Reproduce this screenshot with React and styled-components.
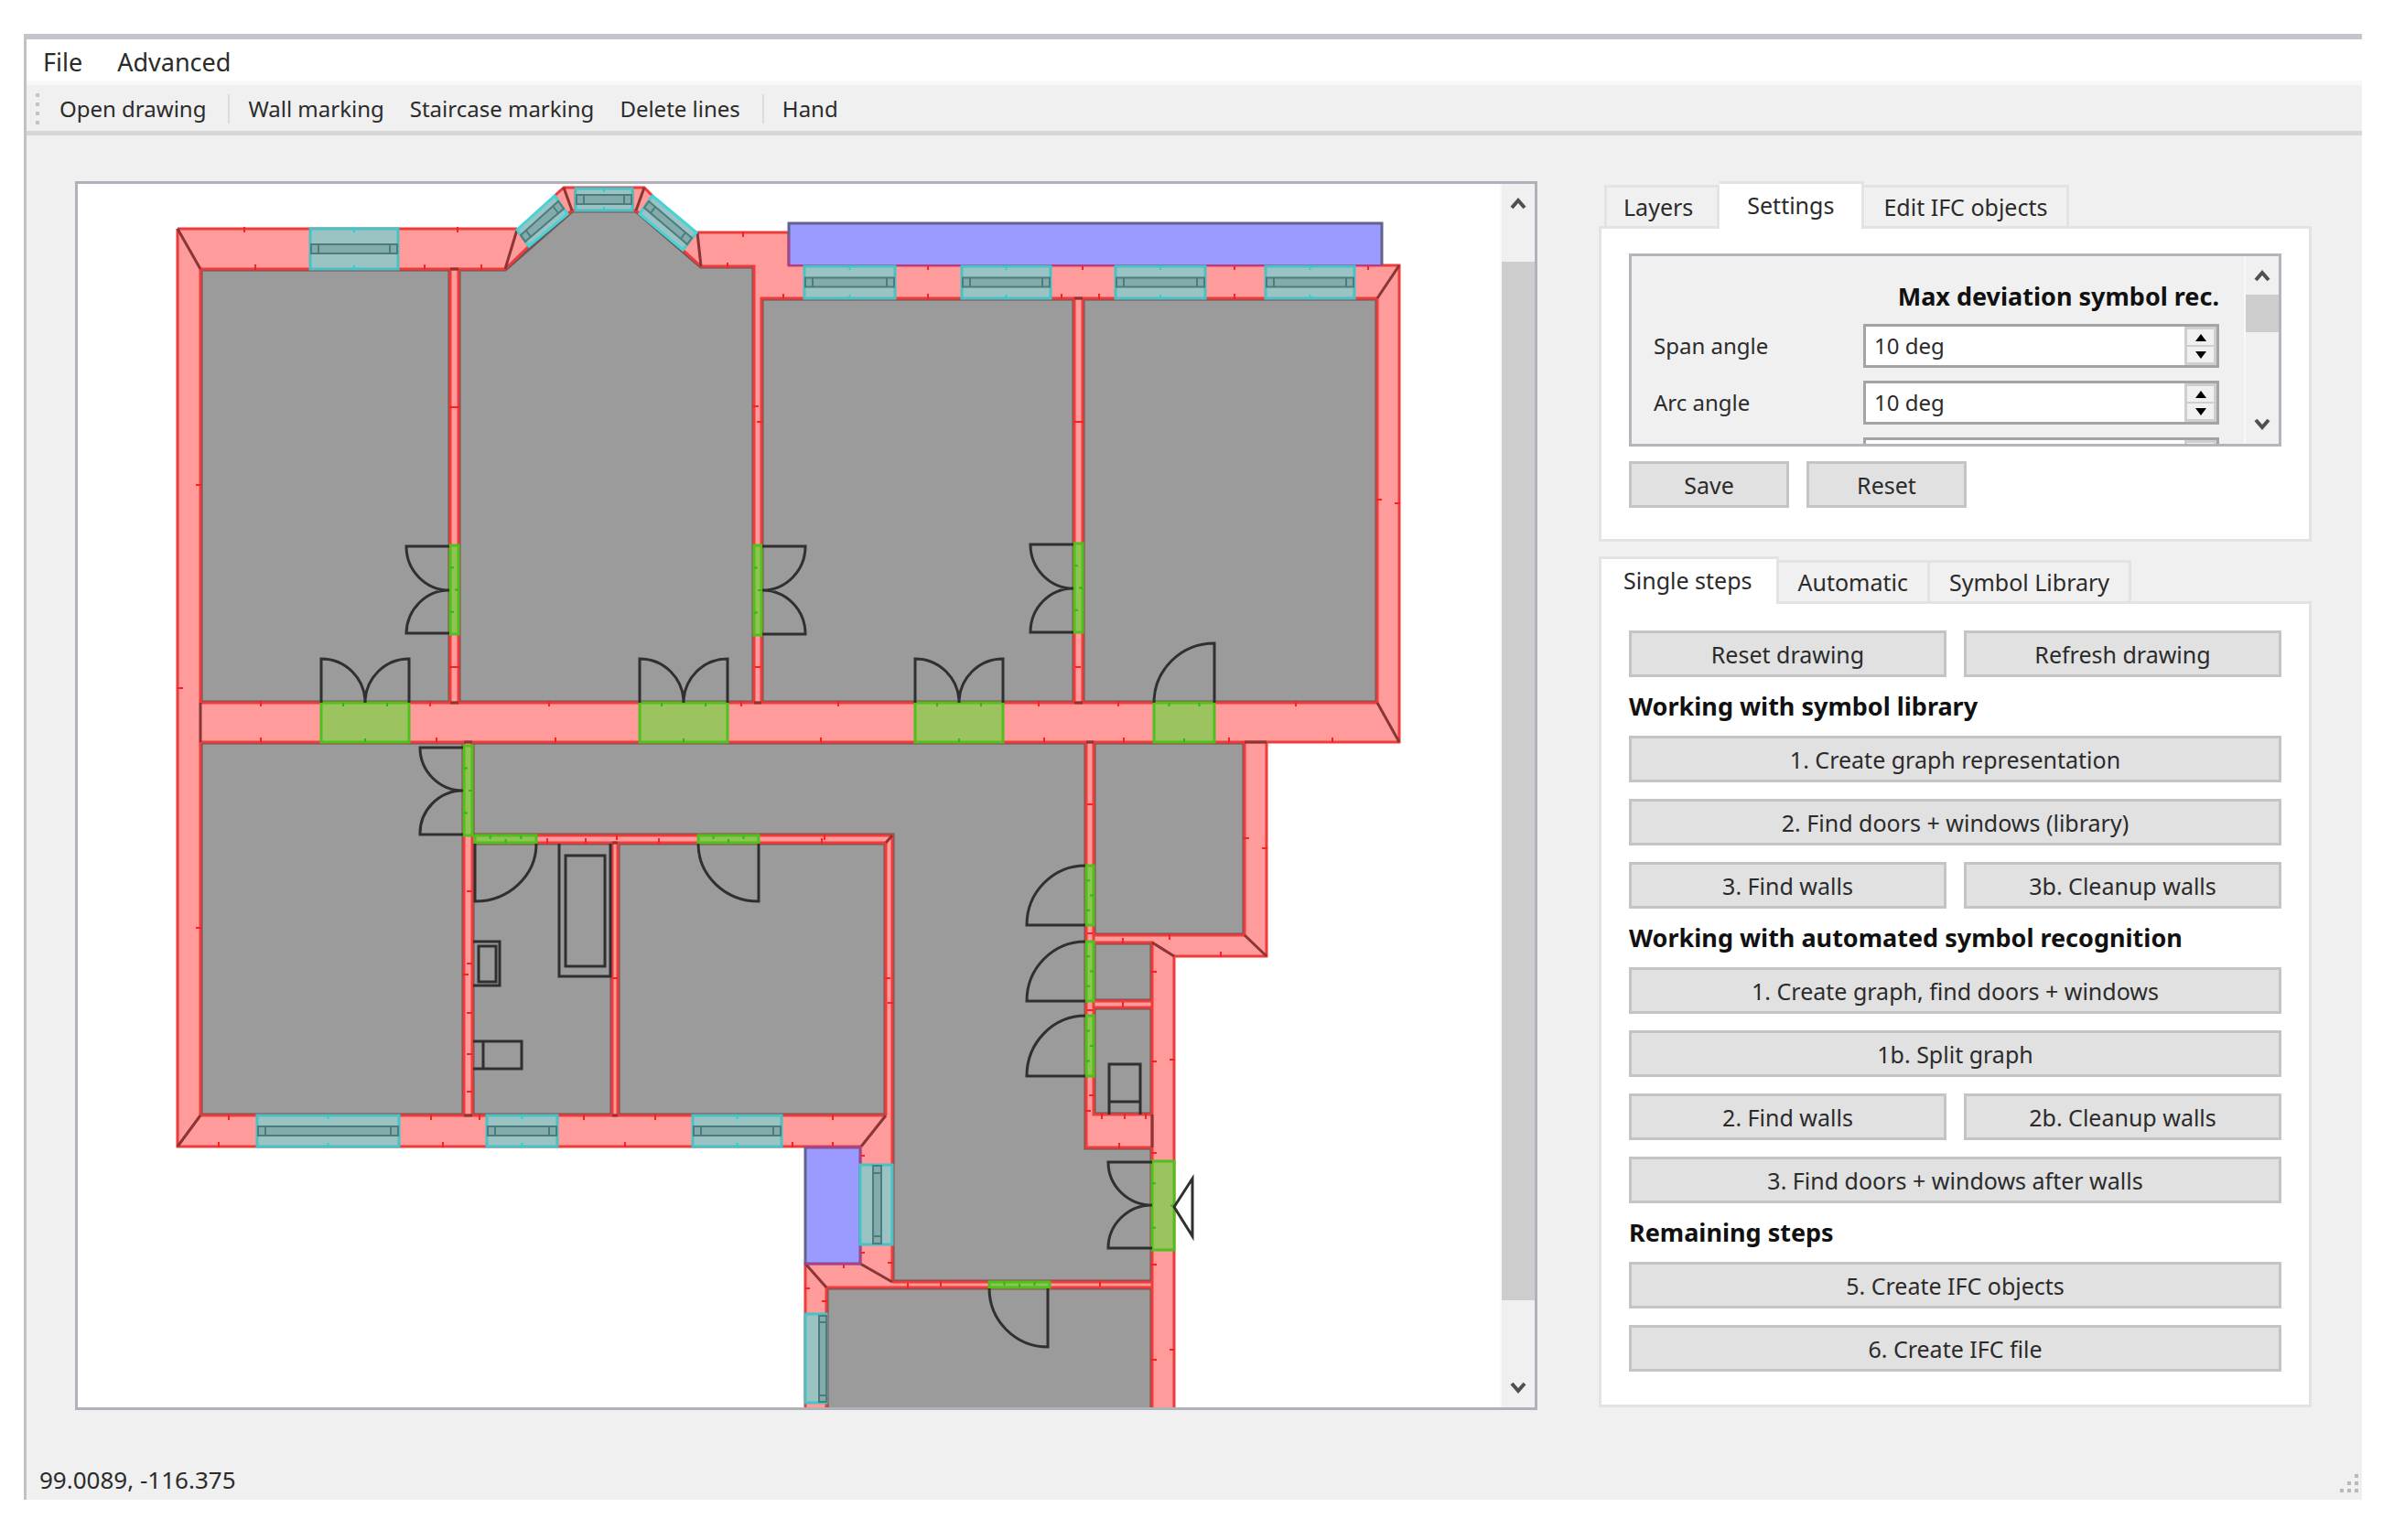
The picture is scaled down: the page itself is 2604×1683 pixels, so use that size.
import React, { useState } from "react";
import styled, { createGlobalStyle, css } from "styled-components";

//Plan geometry, in drawing units
const rooms = [
    "M219 294H492V768H219Z",
    "M501 294H552L625 230H695L766 291H824V768H501Z",
    "M832 326H1174V768H832Z",
    "M1183 326H1505V768H1183Z",
    "M219 811H507V1219H219Z",
    "M516 811H1187V1254H1259V1401H975V913H516Z",
    "M516 921H669V1219H516Z",
    "M675 921H968V1219H675Z",
    "M1195 811H1360V1022H1195Z",
    "M1195 1030H1259V1094H1195Z",
    "M1195 1101H1259V1218H1195Z",
    "M903 1407H1259V1545H903Z",
];

const walls = [
    "M194 250L219 294V1219L194 1253Z",
    "M194 250H565L578 269L552 294H219Z",
    "M606 214L616 205H629V230H625L620 234Z",
    "M691 205H704L713 214L699 234L695 230H691Z",
    "M761 254H862V290H1529L1505 326H832V768H824V291H766L746 273Z",
    "M492 294H501V768H492Z",
    "M1174 326H1183V768H1174Z",
    "M1529 290V811L1505 768V326Z",
    "M219 768H1505L1529 811H219Z",
    "M507 811H516V1219H507Z",
    "M516 913H975V921H516Z",
    "M669 921H675V1219H669Z",
    "M194 1253L219 1219H968V921H975V1401L940 1381V1253Z",
    "M880 1381H940L975 1401H1259V1407H903V1545H880Z",
    "M1187 811H1195V1218H1259V1254H1187Z",
    "M1360 811H1384V1045H1283V1545H1259V1030H1195V1022H1360Z",
    "M1195 1094H1259V1101H1195Z",
];

const wallEdges = [
    "M194 250V1253H941M194 250H565M219 294V768M219 811V1219H968",
    "M219 294H552L578 269M606 214L616 205H704L713 214M620 234L625 230H695L699 234",
    "M629 205V230M691 205V230M606 214L620 234M713 214L699 234M565 251L578 269M761 254L746 273",
    "M746 273L766 291H824V768M761 254H862V290H1529V811H219",
    "M832 768V326H1505V768H219",
    "M492 294V768M501 294V768M1174 326V768M1183 326V768",
    "M507 811V1219M516 811V1219M516 913H975V1401M516 921H968V1219",
    "M669 921V1219M675 921V1219",
    "M940 1253V1381H880V1545M975 1401H1259M903 1545V1407H1259",
    "M1187 811V1254H1259M1195 811V1218H1259",
    "M1360 811V1022H1195M1384 811V1045H1283V1545M1195 1030H1259V1545",
    "M1195 1094H1259M1195 1101H1259",
];

const joints =
    "M194 250L219 294M194 1253L219 1219M219 768V811M565 251L552 294M616 205L625 230" +
    "M704 205L695 230M762 254L766 291M1529 290L1505 326M1505 768L1529 811M492 294H501" +
    "M492 768H501M824 768H832M1174 768H1183M1174 326H1183M507 811H516M507 1219H516M669 1219H675" +
    "M669 921H675M968 1219L941 1253M968 921L975 913M940 1381L975 1401M880 1381L903 1407" +
    "M1360 811H1384M1360 1022L1384 1045M1259 1030L1283 1045M1259 1218V1254M1187 811H1195";

const wallTicks = [
    [267, 251], [500, 251], [279, 292], [464, 292], [526, 292], [812, 256], [795, 290],
    [285, 769], [470, 769], [600, 769], [810, 769], [916, 769], [1135, 769], [1222, 769], [1416, 769],
    [285, 809], [477, 809], [607, 809], [897, 809], [1141, 809], [1228, 809], [1343, 809], [1456, 809],
    [856, 324], [1014, 324], [1014, 292], [1160, 324], [1183, 292], [1201, 324], [1349, 324], [1349, 292], [1495, 292],
    [250, 1221], [471, 1221], [524, 1221], [638, 1221], [716, 1221], [910, 1221],
    [239, 1251], [484, 1251], [683, 1251], [866, 1251], [910, 1251],
    [598, 919], [640, 919], [720, 919], [898, 919], [674, 915], [901, 915],
    [1227, 1028], [1278, 1024], [1334, 1043], [1227, 1098], [1204, 1220], [1229, 1220], [1252, 1220], [1223, 1252],
    [1028, 1403], [992, 1405], [1202, 1403], [922, 1383],
];

const wallSideTicks = [
    [217, 530], [197, 752], [217, 1014], [494, 445], [499, 445], [494, 729], [499, 729],
    [826, 444], [830, 461], [828, 729], [1176, 461], [1181, 461], [1178, 729], [1507, 546], [1527, 550],
    [513, 974], [513, 1053], [509, 1065], [513, 1107], [513, 1152], [513, 1193], [672, 1069],
    [970, 1069], [973, 1096], [1191, 879], [1362, 916], [1382, 927], [1261, 1062], [1261, 1160],
    [1281, 1158], [1191, 1020], [1191, 1104], [1193, 1197], [1189, 1214], [1261, 1260], [1261, 1382],
    [1261, 1486], [1281, 1475], [942, 1263], [942, 1369], [973, 1380], [882, 1408], [901, 1422],
];

const windows = [
    { x: 339, y: 250, w: 96, h: 44 },
    { x: 629, y: 206, w: 62, h: 24 },
    { x: 879, y: 291, w: 99, h: 35 },
    { x: 1051, y: 291, w: 97, h: 35 },
    { x: 1219, y: 291, w: 98, h: 35 },
    { x: 1383, y: 291, w: 97, h: 35 },
    { x: 281, y: 1219, w: 155, h: 34 },
    { x: 532, y: 1219, w: 77, h: 34 },
    { x: 757, y: 1219, w: 97, h: 34 },
];

const doorways = [
    { x: 351, y: 768, w: 96, h: 43 },
    { x: 699, y: 768, w: 96, h: 43 },
    { x: 1000, y: 768, w: 96, h: 43 },
    { x: 1261, y: 768, w: 66, h: 43 },
    { x: 492, y: 596, w: 9, h: 97 },
    { x: 824, y: 596, w: 8, h: 98 },
    { x: 1174, y: 594, w: 9, h: 97 },
    { x: 507, y: 815, w: 9, h: 98 },
    { x: 519, y: 913, w: 67, h: 8 },
    { x: 763, y: 913, w: 66, h: 8 },
    { x: 1187, y: 946, w: 8, h: 65 },
    { x: 1187, y: 1029, w: 8, h: 65 },
    { x: 1187, y: 1110, w: 8, h: 66 },
    { x: 1259, y: 1269, w: 24, h: 97 },
    { x: 1081, y: 1401, w: 66, h: 6 },
];

const doorLeaves = [
    "M351 768V720A48 48 0 0 1 399 768A48 48 0 0 1 447 720V768",
    "M699 768V720A48 48 0 0 1 747 768A48 48 0 0 1 795 720V768",
    "M1000 768V720A48 48 0 0 1 1048 768A48 48 0 0 1 1096 720V768",
    "M1327 768V703A66 65 0 0 0 1261 768",
    "M491 597H444A47 48 0 0 0 491 645A47 48 0 0 0 444 692H491",
    "M833 597H880A47 48 0 0 1 833 645A47 48 0 0 1 880 693H833",
    "M1173 595H1126A47 48 0 0 0 1173 643A47 48 0 0 0 1126 691H1173",
    "M506 817H459A47 47 0 0 0 506 864A47 47 0 0 0 459 912H506",
    "M519 922V985A67 63 0 0 0 586 922",
    "M829 922V985A66 63 0 0 1 763 922",
    "M1186 1011H1122A64 65 0 0 1 1186 946",
    "M1186 1094H1122A64 65 0 0 1 1186 1029",
    "M1186 1176H1122A64 66 0 0 1 1186 1110",
    "M1259 1270H1211A48 47 0 0 0 1259 1317A48 47 0 0 0 1211 1364H1259",
    "M1145 1408V1472A64 64 0 0 1 1081 1408",
    "M1283 1319L1303 1288V1351Z",
];

const fixtures = [
    "M611 922V1067H667V922M618 935H661V1056H618Z",
    "M517 1138H570V1168H517M528 1138V1168",
    "M1212 1218V1163H1246V1218M1212 1204H1246",
];

const steps = [
    { row: ["Reset drawing", "Refresh drawing"] },
    { heading: "Working with symbol library" },
    { row: ["1. Create graph representation"] },
    { row: ["2. Find doors + windows (library)"] },
    { row: ["3. Find walls", "3b. Cleanup walls"] },
    { heading: "Working with automated symbol recognition" },
    { row: ["1. Create graph, find doors + windows"] },
    { row: ["1b. Split graph"] },
    { row: ["2. Find walls", "2b. Cleanup walls"] },
    { row: ["3. Find doors + windows after walls"] },
    { heading: "Remaining steps" },
    { row: ["5. Create IFC objects"] },
    { row: ["6. Create IFC file"] },
];

const PlanWindow = ({ x, y, w, h }) => {
    const top = y + h / 2 - 5;
    return (
        <g>
            <rect x={x} y={y} width={w} height={h} fill="#9bc3c3" stroke="#45c3c6" strokeWidth="3" />
            <g fill="#84abab" stroke="#4b7d7d" strokeWidth="2">
                <rect x={x + 1} y={top} width={w - 2} height="10" />
                <path d={`M${x + 9} ${top}v10M${x + w - 9} ${top}v10`} />
            </g>
            <path d={`M${x + w / 2} ${y - 1}v5M${x + w / 2} ${y + h + 1}v-5`} stroke="#22d3d6" strokeWidth="2" />
        </g>
    );
};

const Doorway = ({ x, y, w, h }) => (
    <g>
        <rect x={x} y={y} width={w} height={h} fill={Math.min(w, h) < 12 ? "#8fc353" : "#9bc35f"} stroke="#4fc01c" strokeWidth="3" />
        {w > h
            ? <path d={`M${x + w / 4} ${y}v4M${x + w / 2} ${y + h}v-4M${x + (w * 3) / 4} ${y}v4`} stroke="#35b60d" strokeWidth="2" />
            : <path d={`M${x} ${y + h / 4}h4M${x + w} ${y + h / 2}h-4M${x} ${y + (h * 3) / 4}h4`} stroke="#35b60d" strokeWidth="2" />}
    </g>
);

const FloorPlan = () => (
    <Plan viewBox="85 201 1554 1337" role="img" aria-label="Floor plan">
        <path d={rooms.join("")} fill="#9b9b9b" stroke="#6b5656" strokeWidth="5" />
        <path d={walls.join("")} fill="#ff9b9b" />
        <path d={wallEdges.join("")} fill="none" stroke="#ee3b3b" strokeWidth="3" />
        <path d={joints} fill="none" stroke="#8b3535" strokeWidth="3" />
        <path
            d={wallTicks.map(([x, y]) => `M${x} ${y - 3}v6`).join("") + wallSideTicks.map(([x, y]) => `M${x - 3} ${y}h6`).join("")}
            stroke="#ff1f1f"
            strokeWidth="2"
        />

        {/* Slanted bay windows */}
        <g fill="#9bc3c3" stroke="#45d3d6" strokeWidth="3">
            <path d="M565 251L606 214L620 234L578 269Z" />
            <path d="M713 214L761 254L746 273L699 234Z" />
        </g>
        <g fill="#84abab" stroke="#4b7d7d" strokeWidth="2">
            <path d="M569 257L610 220L616 228L574 264ZM575 252L580 259M604 225L610 233" />
            <path d="M709 220L756 260L751 267L704 227ZM716 226L711 233M749 254L744 261" />
        </g>

        {/* Balconies */}
        <g fill="#9b9bff" stroke="#62628f" strokeWidth="3">
            <path d="M862 290V244H1510V290" />
            <path d="M880 1254V1381H940V1254Z" />
        </g>
        <path d="M862 258V290H1510M880 1254H940V1381H880" fill="none" stroke="#b53b90" strokeWidth="2" />

        {windows.map((win) => <PlanWindow key={`${win.x}-${win.y}`} {...win} />)}

        {/* Upright windows beside the lower balcony */}
        <g fill="#9bc3c3" stroke="#45c3c6" strokeWidth="3">
            <rect x="940" y="1273" width="35" height="87" />
            <rect x="880" y="1436" width="23" height="97" />
        </g>
        <g fill="#84abab" stroke="#4b7d7d" strokeWidth="2">
            <path d="M954 1274H963V1359H954ZM954 1282H963M954 1351H963" />
            <path d="M895 1438H903V1532H895ZM895 1445H903M895 1525H903" />
        </g>

        {doorways.map((door) => <Doorway key={`${door.x}-${door.y}`} {...door} />)}
        <path d={doorLeaves.join("")} fill="none" stroke="#303030" strokeWidth="3" />
        <path d={fixtures.join("")} fill="none" stroke="#303030" strokeWidth="3" />
        <path d="M517 1029H546V1077H517M523 1034H542V1073H523Z" fill="none" stroke="#303030" strokeWidth="3" />
    </Plan>
);

const ScrollBar = ({ name, width, start, size }) => (
    <Track $width={width}>
        <ScrollButton aria-label={`${name} up`}>
            <svg width="20" height="14" viewBox="0 0 20 14"><path d="M3 12L10 4L17 12" /></svg>
        </ScrollButton>
        <Rail>
            <Spacer $grow={start} />
            <Thumb $grow={size} />
            <Spacer $grow={100 - start - size} />
        </Rail>
        <ScrollButton aria-label={`${name} down`}>
            <svg width="20" height="14" viewBox="0 0 20 14"><path d="M3 2L10 10L17 2" /></svg>
        </ScrollButton>
    </Track>
);

const SpinRow = ({ id, label, value }) => (
    <>
        <label htmlFor={id}>{label}</label>
        <Spin>
            <input id={id} type="text" defaultValue={value} aria-label={label ? undefined : "Next angle"} />
            <SpinButtons>
                <button type="button" aria-label="Increase"><svg width="12" height="8"><path d="M6 0L12 8H0Z" /></svg></button>
                <button type="button" aria-label="Decrease"><svg width="12" height="8"><path d="M0 0H12L6 8Z" /></svg></button>
            </SpinButtons>
        </Spin>
    </>
);

const Tabs = ({ names, initial, inset }) => {
    const [active, setActive] = useState(initial);
    return (
        <TabList role="tablist" $inset={inset}>
            {names.map((name, idx) => (
                <Tab key={name} role="tab" aria-selected={idx === active} $active={idx === active} onClick={() => setActive(idx)}>
                    {name}
                </Tab>
            ))}
        </TabList>
    );
};

const App = () => (
    <>
        <GlobalStyle />
        <Window>
            <MenuBar>
                <MenuButton>File</MenuButton>
                <MenuButton>Advanced</MenuButton>
            </MenuBar>
            <ToolBar>
                <Handle />
                <ToolButton>Open drawing</ToolButton>
                <Separator />
                <ToolButton>Wall marking</ToolButton>
                <ToolButton>Staircase marking</ToolButton>
                <ToolButton>Delete lines</ToolButton>
                <Separator />
                <ToolButton>Hand</ToolButton>
            </ToolBar>
            <Content>
                <Canvas>
                    <FloorPlan />
                    <ScrollBar name="Scroll drawing" width={38} start={3.4} size={90.6} />
                </Canvas>
                <Sidebar>
                    <section>
                        <Tabs names={["Layers", "Settings", "Edit IFC objects"]} initial={1} inset />
                        <Panel $top={27} $gap={16} $bottom={34}>
                            <SettingsBox>
                                <SettingsForm>
                                    <FormTitle>Max deviation symbol rec.</FormTitle>
                                    <SpinRow id="span-angle" label="Span angle" value="10 deg" />
                                    <SpinRow id="arc-angle" label="Arc angle" value="10 deg" />
                                    <SpinRow id="next-angle" label="" value="" />
                                </SettingsForm>
                                <ScrollBar name="Scroll settings" width={38} start={0} size={34} />
                            </SettingsBox>
                            <SaveRow>
                                <Button>Save</Button>
                                <Button>Reset</Button>
                            </SaveRow>
                        </Panel>
                    </section>
                    <section>
                        <Tabs names={["Single steps", "Automatic", "Symbol Library"]} initial={0} />
                        <Panel $top={29} $gap={18} $bottom={36}>
                            {steps.map(({ heading, row }) => heading
                                ? <Heading key={heading}>{heading}</Heading>
                                : <ButtonRow key={row[0]}>{row.map((text) => <Button key={text}>{text}</Button>)}</ButtonRow>
                            )}
                        </Panel>
                    </section>
                </Sidebar>
            </Content>
            <StatusBar>
                <span>99.0089, -116.375</span>
                <svg width="22" height="22" viewBox="0 0 22 22" fill="#b9b9b9">
                    <path d="M16 0h4v4h-4zM16 8h4v4h-4zM8 8h4v4h-4zM16 16h4v4h-4zM8 16h4v4h-4zM0 16h4v4h-4z" />
                </svg>
            </StatusBar>
        </Window>
    </>
);

const GlobalStyle = createGlobalStyle`
    * {
        box-sizing: border-box;
    }
    body {
        margin: 0;
        background: #fff;
    }
    body, button, input {
        font-family: "Noto Sans", "Open Sans", sans-serif;
        font-size: 25px;
        line-height: 32px;
        color: #2b2b2b;
    }
    button {
        border: none;
        background: none;
        padding: 0;
        white-space: nowrap;
    }
`

const Window = styled.div`
    display: flex;
    flex-direction: column;
    margin: 37px 23px 44px 26px;
    background: #f0f0f0;
    border-top: 6px solid #c4c5ca;
    border-left: 3px solid #c0c2c8;
`

const MenuBar = styled.nav`
    display: flex;
    gap: 38px;
    height: 50px;
    padding: 0 18px;
    background: #fff;
    border-bottom: 5px solid #f8f8f8;
`

const MenuButton = styled.button`
    height: 50px;
    font-size: 27px;
`

const ToolBar = styled.div`
    display: flex;
    align-items: center;
    height: 55px;
    padding: 2px 10px 0;
    border-bottom: 5px solid #d6d6d6;
`

const ToolButton = styled.button`
    padding: 0 14px;
    font-size: 24px;
`

const Handle = styled.span`
    width: 4px;
    height: 34px;
    margin-right: 8px;
    background: repeating-linear-gradient(#c4c4c4 0 4px, transparent 4px 10px);
`

const Separator = styled.span`
    width: 2px;
    height: 32px;
    margin: 0 6px 0 10px;
    background: #dcdcdc;
`

const Content = styled.main`
    display: grid;
    grid-template-columns: minmax(0, 1fr) 779px;
    gap: 67px;
    padding: 50px 55px 0 53px;
`

const Canvas = styled.div`
    display: flex;
    align-self: start;
    background: #fff;
    border: 3px solid #b0b2ba;
`

const Plan = styled.svg`
    display: block;
    flex: 1 1 0;
    min-width: 0;
`

const Track = styled.div`
    display: flex;
    flex-direction: column;
    flex: none;
    width: ${props => props.$width}px;
    background: #f0f0f0;
    border-left: 2px solid #f8f8f8;
`

const ScrollButton = styled.button`
    display: flex;
    align-items: center;
    justify-content: center;
    height: 42px;

    path {
        fill: none;
        stroke: #505050;
        stroke-width: 4;
    }
`

const Rail = styled.div`
    display: flex;
    flex-direction: column;
    flex: 1;
`

const Spacer = styled.div`
    flex: ${props => props.$grow} 0 0;
`

const Thumb = styled.div`
    flex: ${props => props.$grow} 0 0;
    background: #cdcdcd;
`

const Sidebar = styled.aside`
    display: flex;
    flex-direction: column;
    gap: 16px;
`

const TabList = styled.div`
    display: flex;
    align-items: flex-end;
    padding-left: ${props => props.$inset ? 6 : 0}px;
`

const Tab = styled.button`
    height: 45px;
    padding: 0 21px;
    border: 3px solid #e3e3e3;
    border-bottom: none;
    border-left-width: 0;

    ${props => props.$active && css`
        position: relative;
        height: 52px;
        margin-bottom: -3px;
        padding: 0 30px 3px;
        background: #fff;
    `}

    &:first-child {
        padding-right: 26px;
        padding-left: ${props => props.$active ? 24 : 18}px;
        border-left-width: 3px;
    }
`

const Panel = styled.div`
    display: flex;
    flex-direction: column;
    gap: ${props => props.$gap}px;
    padding: ${props => props.$top}px 30px ${props => props.$bottom}px;
    background: #fff;
    border: 3px solid #e3e3e3;
`

const SettingsBox = styled.div`
    display: flex;
    height: 211px;
    overflow: hidden;
    background: #f0f0f0;
    border: 3px solid #b3b5bc;
`

const SettingsForm = styled.form`
    display: grid;
    flex: 1;
    grid-template-columns: 1fr 389px;
    align-content: start;
    align-items: center;
    gap: 14px 0;
    padding: 28px 27px 0 24px;

    label, input {
        font-size: 24px;
    }
`

const FormTitle = styled.strong`
    grid-column: 1 / -1;
    font-size: 27px;
    text-align: right;
    color: #111;
`

const Spin = styled.div`
    display: flex;
    height: 48px;
    background: #fff;
    border: 3px solid #a4a4a4;

    input {
        flex: 1;
        min-width: 0;
        padding: 0 9px;
        border: none;
        outline: none;
    }
`

const SpinButtons = styled.div`
    display: flex;
    flex-direction: column;
    justify-content: center;
    gap: 2px;
    width: 35px;
    padding: 3px;
    background: #cfcfcf;

    button {
        display: flex;
        flex: 1;
        align-items: center;
        justify-content: center;
        background: #f0f0f0;
    }
`

const ButtonRow = styled.div`
    display: flex;
    gap: 19px;
`

const SaveRow = styled(ButtonRow)`
    button {
        flex: 0 0 175px;
    }
`

const Button = styled.button`
    flex: 1 1 0;
    height: 51px;
    background: #e1e1e1;
    border: 3px solid #c4c4c4;
`

const Heading = styled.h3`
    margin: 0;
    font-size: 27px;
    line-height: 28px;
    color: #111;
`

const StatusBar = styled.footer`
    display: flex;
    align-items: flex-end;
    justify-content: space-between;
    height: 98px;
    padding: 0 2px 6px 14px;
    font-size: 26px;
`

export default App;
